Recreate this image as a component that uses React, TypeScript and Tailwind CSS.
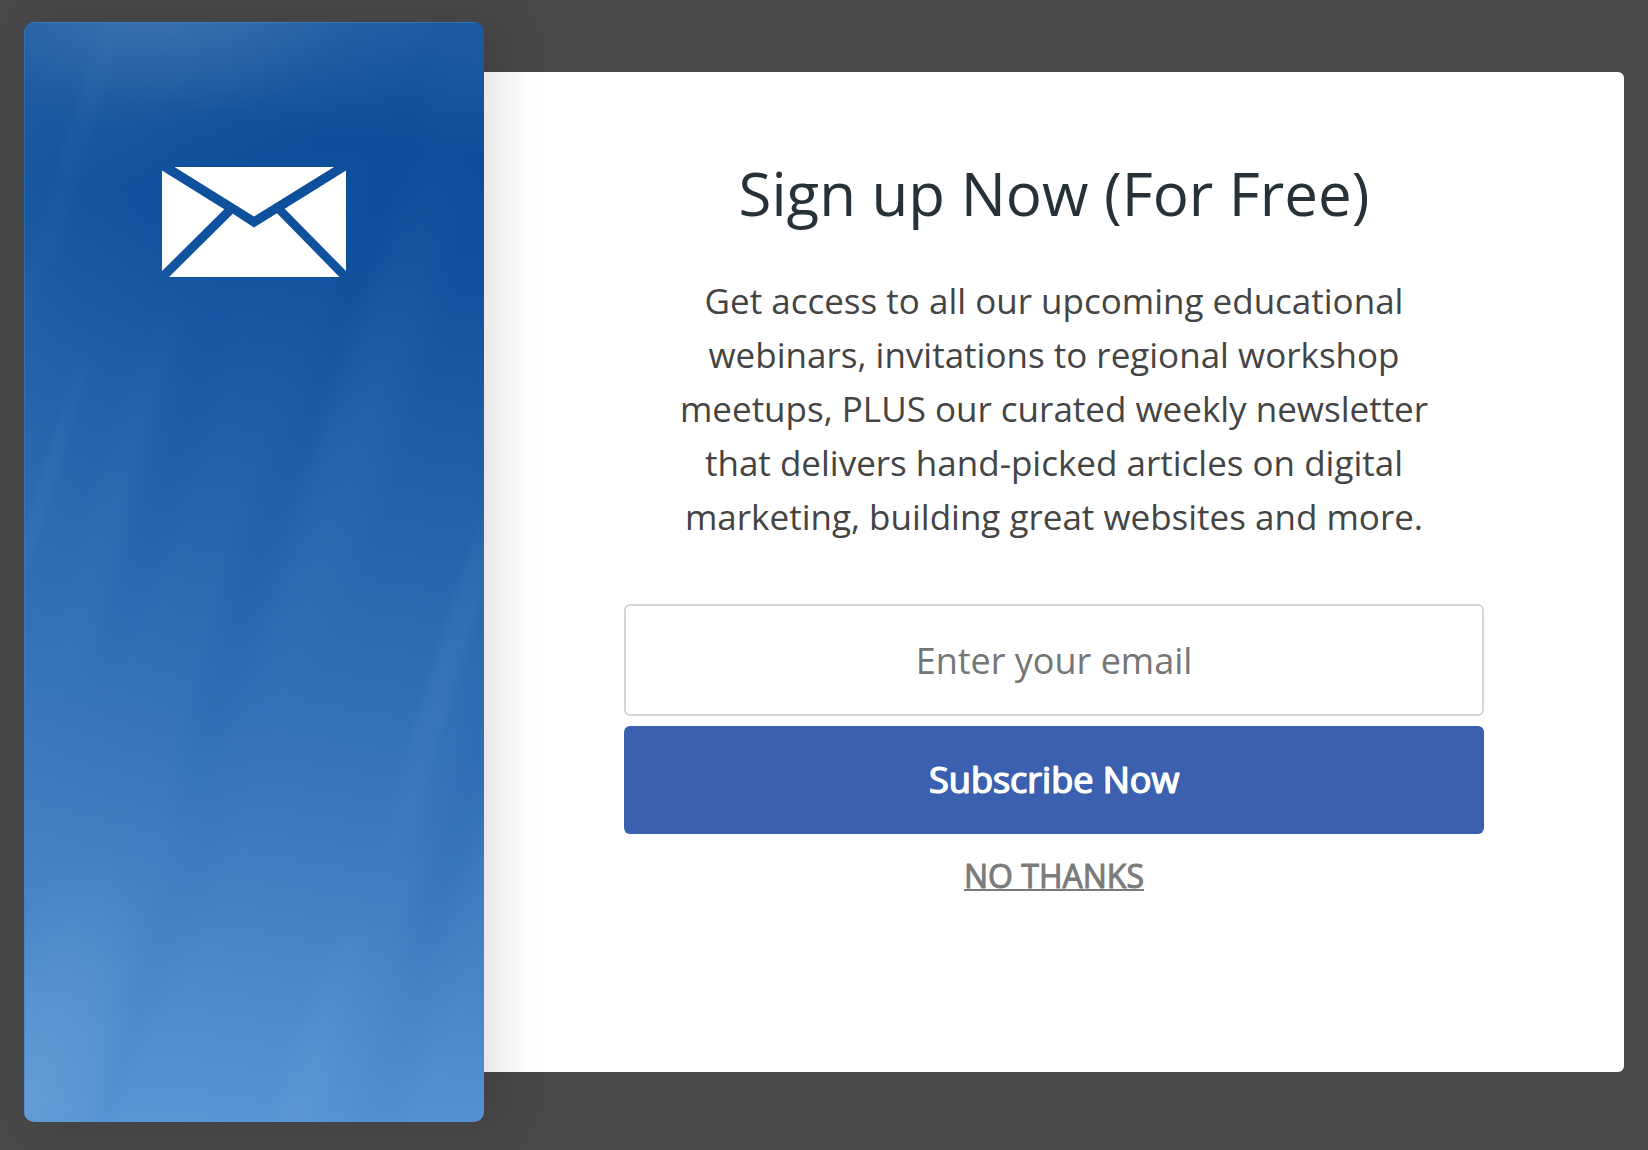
type Streak = { x: number; y: number; length: number; width: number; tone: string; opacity: number };

const streaks: Streak[] = [
  { x: 50, y: 130, length: 260, width: 16, tone: '#5a97d2', opacity: 0.07 },
  { x: 20, y: 470, length: 170, width: 12, tone: '#6aa2da', opacity: 0.09 },
  { x: 90, y: 480, length: 240, width: 30, tone: '#5a97d2', opacity: 0.07 },
  { x: 150, y: 430, length: 260, width: 36, tone: '#0c4e9c', opacity: 0.15 },
  { x: 340, y: 230, length: 260, width: 28, tone: '#06458f', opacity: 0.16 },
  { x: 240, y: 520, length: 320, width: 36, tone: '#0f539f', opacity: 0.2 },
  { x: 340, y: 400, length: 320, width: 50, tone: '#5a97d2', opacity: 0.09 },
  { x: 425, y: 640, length: 240, width: 20, tone: '#8ab8e4', opacity: 0.09 },
  { x: 440, y: 780, length: 200, width: 36, tone: '#2362ad', opacity: 0.3 },
  { x: 390, y: 980, length: 220, width: 44, tone: '#2b6cb5', opacity: 0.16 },
  { x: 190, y: 780, length: 280, width: 40, tone: '#2563ad', opacity: 0.1 },
  { x: 110, y: 990, length: 200, width: 28, tone: '#3574bb', opacity: 0.12 },
  { x: 10, y: 1060, length: 240, width: 80, tone: '#8cbbe0', opacity: 0.2 },
  { x: 290, y: 1040, length: 170, width: 30, tone: '#8cbbe6', opacity: 0.09 },
];

function PanelBackdrop() {
  return (
    <svg
      className="absolute inset-0 h-full w-full"
      viewBox="0 0 460 1100"
      preserveAspectRatio="none"
      aria-hidden="true"
    >
      <defs>
        <linearGradient id="sky" gradientUnits="userSpaceOnUse" x1="310" y1="0" x2="120" y2="1100">
          <stop offset="0" stopColor="#1c5aa3" />
          <stop offset="0.1" stopColor="#0c4e99" />
          <stop offset="0.2" stopColor="#0f519c" />
          <stop offset="0.34" stopColor="#1c5da6" />
          <stop offset="0.5" stopColor="#2869b0" />
          <stop offset="0.64" stopColor="#3473b9" />
          <stop offset="0.8" stopColor="#4582c4" />
          <stop offset="0.92" stopColor="#528fcf" />
          <stop offset="1" stopColor="#5a95d4" />
        </linearGradient>
        <radialGradient
          id="glow"
          gradientUnits="userSpaceOnUse"
          cx="0"
          cy="0"
          r="1"
          gradientTransform="translate(140 -20) rotate(-8) scale(290 180)"
        >
          <stop offset="0" stopColor="#6a92bd" stopOpacity="0.45" />
          <stop offset="0.35" stopColor="#6a92bd" stopOpacity="0.28" />
          <stop offset="0.7" stopColor="#6a92bd" stopOpacity="0.08" />
          <stop offset="1" stopColor="#6a92bd" stopOpacity="0" />
        </radialGradient>
        <linearGradient id="side" x1="0" y1="0" x2="1" y2="0">
          <stop offset="0" stopColor="#4b88c4" stopOpacity="0.12" />
          <stop offset="0.12" stopColor="#4b88c4" stopOpacity="0.07" />
          <stop offset="0.35" stopColor="#4b88c4" stopOpacity="0" />
        </linearGradient>
        {streaks.map((s, i) => (
          <radialGradient key={i} id={`streak-${i}`}>
            <stop offset="0" stopColor={s.tone} stopOpacity={s.opacity} />
            <stop offset="0.5" stopColor={s.tone} stopOpacity={s.opacity * 0.6} />
            <stop offset="1" stopColor={s.tone} stopOpacity="0" />
          </radialGradient>
        ))}
      </defs>
      <rect width="460" height="1100" fill="url(#sky)" />
      <rect width="460" height="1100" fill="url(#side)" />
      <rect width="460" height="300" fill="url(#glow)" />
      {streaks.map((s, i) => (
        <ellipse
          key={i}
          rx={s.width}
          ry={s.length}
          fill={`url(#streak-${i})`}
          transform={`translate(${s.x} ${s.y}) rotate(17)`}
        />
      ))}
      <path d="M0 0.5H460" stroke="#3f7cc0" strokeOpacity="0.7" />
      <path d="M0.5 0V1100" stroke="#3f7cc0" strokeOpacity="0.5" />
    </svg>
  );
}

function EnvelopeIcon() {
  return (
    <svg className="relative h-[110px] w-[184px]" viewBox="0 0 184 110" fill="#fff" aria-hidden="true">
      <path d="M12.5 0H172L92 49.5Z" />
      <path d="M0 3.5L62.3 42.3L0 104Z" />
      <path d="M184 3.5L122.7 41.8L184 104Z" />
      <path d="M7 110L70.8 46.8L92 60.5L115 46.3L177.5 110Z" />
    </svg>
  );
}

export default function App() {
  return (
    <div className="min-h-screen bg-[#484848] px-6 pt-[22px] pb-7 font-['Open_Sans',sans-serif]">
      <main className="flex">
        <aside className="relative z-10 flex w-[28.75%] shrink-0 justify-center overflow-hidden rounded-[10px] pt-[145px] shadow-[16px_0_48px_rgba(0,0,0,0.12)]">
          <PanelBackdrop />
          <EnvelopeIcon />
        </aside>
        <section className="my-[50px] flex min-h-[1000px] flex-1 flex-col items-center rounded-r-md bg-white px-[140px] pt-20 text-center">
          <h1 className="text-[60px] leading-[82px] text-[#263238]">Sign up Now (For Free)</h1>
          <p className="mt-10 max-w-[780px] text-[35px] leading-[54px] text-[#444]">
            Get access to all our upcoming educational webinars, invitations to regional workshop
            meetups, PLUS our curated weekly newsletter that delivers hand-picked articles on digital
            marketing, building great websites and more.
          </p>
          <form className="mt-[60px] flex w-full flex-col items-center" onSubmit={(e) => e.preventDefault()}>
            <input
              type="email"
              aria-label="Email"
              placeholder="Enter your email"
              className="h-28 w-full rounded-md border-2 border-[#d5d5d5] bg-white text-center text-4xl text-[#444] placeholder:text-[#757575]"
            />
            <button
              type="submit"
              className="mt-[10px] h-[108px] w-full rounded-md bg-[#3a60af] text-4xl text-white [-webkit-text-stroke:1px_#fff] [text-shadow:1px_0_#fff]"
            >
              Subscribe Now
            </button>
            <button
              type="button"
              className="mt-5 text-[32px] leading-[44px] text-[#7b7b7b] underline decoration-2 [-webkit-text-stroke:1px_#7b7b7b]"
            >
              NO THANKS
            </button>
          </form>
        </section>
      </main>
    </div>
  );
}
